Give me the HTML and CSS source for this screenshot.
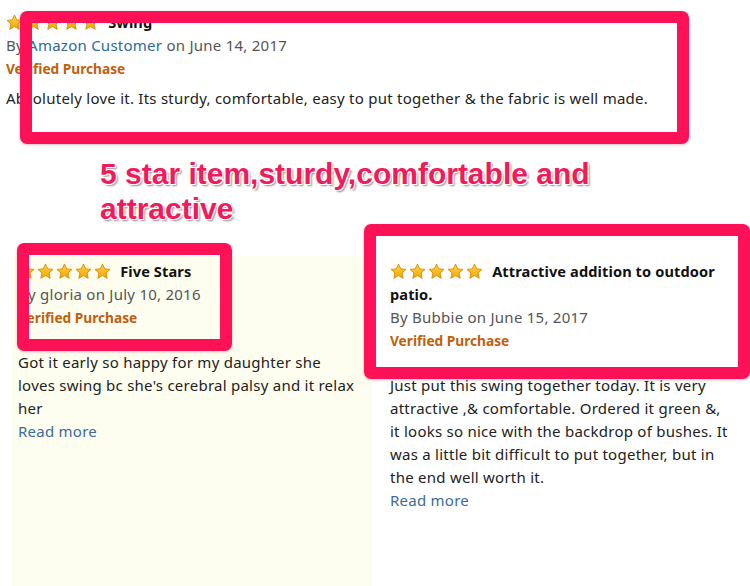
FILE: index.html
```html
<!DOCTYPE html>
<html lang="en">
<head>
<meta charset="utf-8">
<title>Swing reviews</title>
<link rel="stylesheet" href="styles.css">
</head>
<body>
<svg class="defs" width="0" height="0" aria-hidden="true">
  <defs>
    <linearGradient id="gold" x1="0" y1="0" x2="0" y2="1">
      <stop offset="0" stop-color="#ffd54a"/>
      <stop offset="1" stop-color="#f6a500"/>
    </linearGradient>
    <symbol id="star" viewBox="0 0 20 20">
      <polygon points="10,1.2 12.6,7 18.8,7.5 14.1,11.7 15.5,18 10,14.7 4.5,18 5.9,11.7 1.2,7.5 7.4,7" fill="url(#gold)" stroke="#d98b00" stroke-width="1.1" stroke-linejoin="round"/>
    </symbol>
  </defs>
</svg>

<div class="page">
  <section class="review top-review">
    <div class="title-line">
      <span class="stars"><svg><use href="#star"/></svg><svg><use href="#star"/></svg><svg><use href="#star"/></svg><svg><use href="#star"/></svg><svg><use href="#star"/></svg></span>
      <span class="title">Swing</span>
    </div>
    <div class="meta">By <a class="author">Amazon Customer</a> on June 14, 2017</div>
    <div class="verified">Verified Purchase</div>
    <p class="body">Absolutely love it. Its sturdy, comfortable, easy to put together &amp; the fabric is well made.</p>
  </section>

  <h1 class="headline">5 star item,sturdy,comfortable and<br>attractive</h1>

  <div class="columns">
    <section class="review col-left">
      <div class="title-line">
        <span class="stars"><svg><use href="#star"/></svg><svg><use href="#star"/></svg><svg><use href="#star"/></svg><svg><use href="#star"/></svg><svg><use href="#star"/></svg></span>
        <span class="title">Five Stars</span>
      </div>
      <div class="meta">By gloria on July 10, 2016</div>
      <div class="verified">Verified Purchase</div>
      <p class="body">Got it early so happy for my daughter she loves swing bc she's cerebral palsy and it relax her</p>
      <a class="more">Read more</a>
    </section>
    <section class="review col-right">
      <div class="title-line">
        <span class="stars"><svg><use href="#star"/></svg><svg><use href="#star"/></svg><svg><use href="#star"/></svg><svg><use href="#star"/></svg><svg><use href="#star"/></svg></span>
        <span class="title">Attractive addition to outdoor patio.</span>
      </div>
      <div class="meta">By Bubbie on June 15, 2017</div>
      <div class="verified">Verified Purchase</div>
      <p class="body">Just put this swing together today. It is very attractive ,&amp; comfortable. Ordered it green &amp;, it looks so nice with the backdrop of bushes. It was a little bit difficult to put together, but in the end well worth it.</p>
      <a class="more">Read more</a>
    </section>
  </div>

  <div class="mark mark-top"></div>
  <div class="mark mark-left"></div>
  <div class="mark mark-right"></div>
</div>
</body>
</html>
```

FILE: styles.css
```css
html, body {
  margin: 0;
  padding: 0;
  background: #ffffff;
}
.defs {
  position: absolute;
  width: 0;
  height: 0;
}
.page {
  position: relative;
  width: 750px;
  height: 586px;
  overflow: hidden;
  font-family: "Noto Sans", "Open Sans", sans-serif;
  font-size: 15px;
  letter-spacing: 0.25px;
  line-height: 23px;
  color: #222;
}
.review p { margin: 0; }
.title-line {
  display: block;
}
.stars {
  display: inline-flex;
  gap: 2px;
  vertical-align: -3px;
  margin-right: 5px;
}
.stars svg {
  width: 17px;
  height: 17px;
}
.title {
  font-weight: bold;
  font-size: 14.6px;
  color: #111;
  letter-spacing: 0.1px;
}
.meta {
  color: #555;
}
.author {
  color: #2a6a9e;
}
.verified {
  color: #c0600c;
  font-weight: bold;
  font-size: 13.7px;
  letter-spacing: 0;
}
.body {
  color: #222;
}
.more {
  display: block;
  color: #3a6a9e;
}

.top-review {
  padding: 11px 0 0 6px;
}
.top-review .body {
  margin-top: 7px;
}

.headline {
  margin: 46px 0 0 100px;
  font-family: "Liberation Sans", Arial, sans-serif;
  font-size: 30px;
  line-height: 35px;
  font-weight: bold;
  letter-spacing: 0;
  color: #f01a5c;
  text-shadow:
    -1px -1px 0 #fff, 1px -1px 0 #fff, -1px 1px 0 #fff, 1px 1px 0 #fff,
    2px 2px 2px rgba(0,0,0,0.45);
}

.columns {
  display: grid;
  grid-template-columns: 360px 378px;
  margin: 30px 0 0 12px;
  height: 340px;
}
.col-left {
  background: #fefef0;
  padding: 4px 14px 0 6px;
}
.col-right {
  padding: 4px 20px 0 18px;
}
.columns .body {
  margin-top: 22px;
}

.mark {
  position: absolute;
  border: 12px solid #ff1157;
  border-radius: 7px;
  box-sizing: border-box;
  box-shadow: 0 1px 3px rgba(120,0,30,0.25);
}
.mark-top {
  left: 20px;
  top: 11px;
  width: 669px;
  height: 133px;
}
.mark-left {
  left: 17px;
  top: 243px;
  width: 215px;
  height: 108px;
}
.mark-right {
  left: 364px;
  top: 224px;
  width: 386px;
  height: 155px;
}
```
